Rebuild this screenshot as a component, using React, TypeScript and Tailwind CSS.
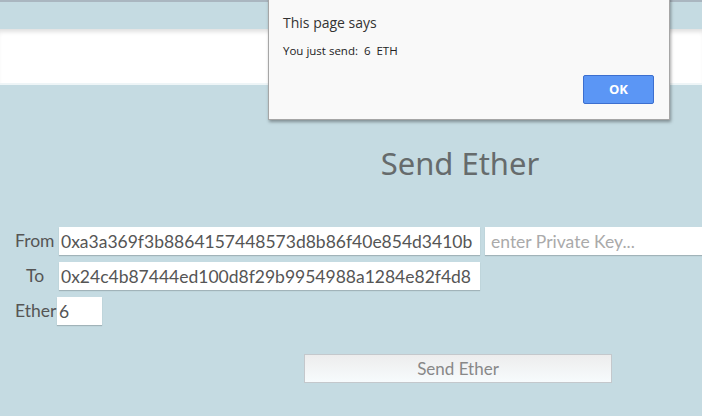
import { useState } from 'react';

export default function App() {
  const [from] = useState('0xa3a369f3b8864157448573d8b86f40e854d3410b');
  const [to] = useState('0x24c4b87444ed100d8f29b9954988a1284e82f4d8');
  const [amount] = useState('6');

  const inputCls =
    'shrink-0 h-[28px] bg-white px-[2px] text-[17.5px] text-[#555] outline-none border-0 shadow-[0_1px_1px_rgba(0,0,0,0.18)]';

  return (
    <div className="relative h-[416px] w-[702px] overflow-hidden bg-[#c5dbe2] font-['Lato','Liberation_Sans',sans-serif]">
      <div className="h-[2px] bg-[#aab6c0]" />
      <div className="h-[27px] bg-[#c5dbe2]" />
      <div className="h-[56px] bg-white shadow-[inset_0_5px_4px_-2px_rgba(0,0,0,0.12)] border-b-2 border-[#eef5f7]" />

      <main className="pt-[58px]">
        <h1 className="ml-[304px] w-[312px] text-center text-[31px] leading-[40px] text-[#666b6c] font-['Noto_Sans','Open_Sans',sans-serif]">
          Send Ether
        </h1>

        <div className="mt-[44px] flex flex-col gap-[7px] pl-[15px] text-[17.5px] text-[#555]">
          <div className="flex items-center">
            <span className="w-[44px] shrink-0">From</span>
            <input className={`${inputCls} w-[421px]`} value={from} readOnly />
            <input
              className={`${inputCls} ml-[5px] w-[300px] px-[6px] placeholder:text-[#aaa]`}
              placeholder="enter Private Key..."
            />
          </div>
          <div className="flex items-center">
            <span className="w-[44px] shrink-0 pl-[11px]">To</span>
            <input className={`${inputCls} w-[421px]`} value={to} readOnly />
          </div>
          <div className="flex items-center">
            <span className="w-[42px] shrink-0">Ether</span>
            <input className={`${inputCls} w-[45px]`} value={amount} readOnly />
          </div>
        </div>

        <div className="ml-[304px] mt-[29px]">
          <button className="h-[29px] w-[308px] border border-[#c4c8cc] bg-gradient-to-b from-[#ededed] to-[#f7fbfd] text-[17px] text-[#888]">
            Send Ether
          </button>
        </div>
      </main>

      <div className="absolute left-[268px] top-[-4px] w-[402px] h-[124px] border border-[#a6a6a6] bg-[#f9f9f9] shadow-[1px_2px_3px_rgba(0,0,0,0.35)] font-['Open_Sans','Noto_Sans',sans-serif]">
        <div className="pl-[14px] pt-[15px] text-[14px] text-[#333]">This page says</div>
        <div className="pl-[14px] pt-[9px] text-[11.5px] text-[#222]">You just send:&nbsp; 6 &nbsp;ETH</div>
        <div className="flex justify-end pr-[15px] pt-[16px]">
          <button className="h-[29px] w-[71px] rounded-[2px] border border-[#3c6fcf] bg-[#5b96f5] text-[13px] font-bold text-white">
            OK
          </button>
        </div>
      </div>
    </div>
  );
}
